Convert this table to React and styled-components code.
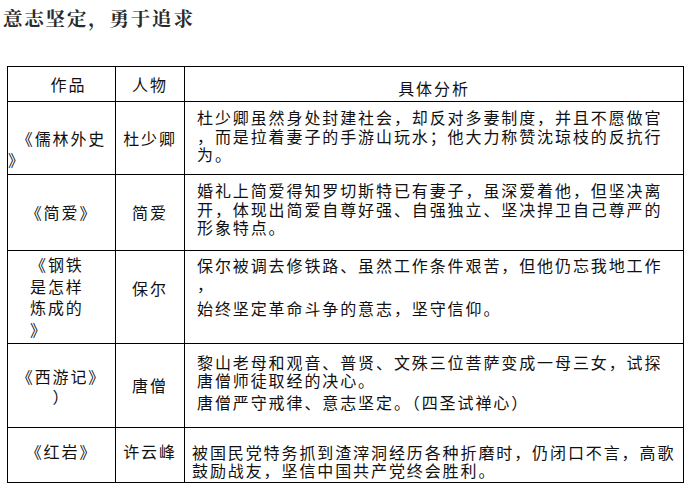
import React from 'react';
import styled, { createGlobalStyle } from 'styled-components';

const GlobalStyle = createGlobalStyle`
    html, body {
        margin: 0;
        padding: 0;
        background: #ffffff;
    }
    body {
        font-family: "Noto Sans CJK SC", "Liberation Sans", sans-serif;
        color: #111111;
    }
`

const rows = [
    {
        height: 73,
        work: { lines: ['《儒林外史', '》'], padTop: 21, lastLeft: true },
        person: { name: '杜少卿' },
        analysis: {
            padTop: 6,
            paras: [['杜少卿虽然身处封建社会，却反对多妻制度，并且不愿做官', '，而是拉着妻子的手游山玩水；他大力称赞沈琼枝的反抗行', '为。']],
        },
    },
    {
        height: 76,
        work: { lines: ['《简爱》'] },
        person: { name: '简爱' },
        analysis: {
            padTop: 6,
            paras: [['婚礼上简爱得知罗切斯特已有妻子，虽深爱着他，但坚决离', '开，体现出简爱自尊好强、自强独立、坚决捍卫自己尊严的', '形象特点。']],
        },
    },
    {
        height: 93,
        work: { lines: ['《钢铁', '是怎样', '炼成的', '》'], left: 22, lineHeight: 21.5 },
        person: { name: '保尔', padBottom: 18 },
        analysis: {
            padTop: 5,
            gap: 6,
            paras: [['保尔被调去修铁路、虽然工作条件艰苦，但他仍忘我地工作', '，'], ['始终坚定革命斗争的意志，坚守信仰。']],
        },
    },
    {
        height: 84,
        work: { lines: ['《西游记》', '）'], lineHeight: 20 },
        person: { name: '唐僧' },
        analysis: {
            padTop: 9,
            lineHeight: 18,
            gap: 4,
            paras: [['黎山老母和观音、普贤、文殊三位菩萨变成一母三女，试探', '唐僧师徒取经的决心。'], ['唐僧严守戒律、意志坚定。（四圣试禅心）']],
        },
    },
    {
        height: 55,
        work: { lines: ['《红岩》'], padBottom: 7 },
        person: { name: '许云峰', padBottom: 7 },
        analysis: {
            padTop: 15,
            padLeft: 0,
            indent: 7,
            lineHeight: 18.3,
            paras: [['被国民党特务抓到渣滓洞经历各种折磨时，仍闭口不言，高歌', '鼓励战友，坚信中国共产党终会胜利。']],
        },
    },
]

export default function App() {
    return (
        <Page>
            <GlobalStyle />
            <Title>意志坚定，勇于追求</Title>
            <Table>
                <colgroup>
                    <col style={{ width: 108 }} />
                    <col style={{ width: 69 }} />
                    <col style={{ width: 499 }} />
                </colgroup>
                <thead>
                    <Row $height={35}>
                        <HeadCell $padLeft={14}>作品</HeadCell>
                        <HeadCell>人物</HeadCell>
                        <HeadCell $padTop={8}>具体分析</HeadCell>
                    </Row>
                </thead>
                <tbody>
                    {rows.map((row, i) => (
                        <Row key={i} $height={row.height}>
                            <WorkCell
                                $left={row.work.left}
                                $padTop={row.work.padTop}
                                $padBottom={row.work.padBottom}
                            >
                                {row.work.lines.map((line, j) => (
                                    <WorkLine
                                        key={j}
                                        $lineHeight={row.work.lineHeight}
                                        $toLeft={row.work.lastLeft && j === row.work.lines.length - 1}
                                    >
                                        {line}
                                    </WorkLine>
                                ))}
                            </WorkCell>
                            <PersonCell $padBottom={row.person.padBottom}>{row.person.name}</PersonCell>
                            <AnalysisCell
                                $padTop={row.analysis.padTop}
                                $padLeft={row.analysis.padLeft}
                                $indent={row.analysis.indent}
                            >
                                {row.analysis.paras.map((para, j) => (
                                    <Para key={j} $gap={j > 0 ? row.analysis.gap : 0}>
                                        {para.map((line, k) => (
                                            <TextLine key={k} $lineHeight={row.analysis.lineHeight}>
                                                {line}
                                            </TextLine>
                                        ))}
                                    </Para>
                                ))}
                            </AnalysisCell>
                        </Row>
                    ))}
                </tbody>
            </Table>
        </Page>
    )
}

const Page = styled.div`
    width: 693px;
    height: 490px;
    overflow: hidden;
    background: #ffffff;
`

const Title = styled.h1`
    margin: 0;
    padding: 6px 0 0 3px;
    height: 24px;
    font-family: "Noto Serif CJK SC", "Noto Sans CJK SC", serif;
    font-size: 19.5px;
    font-weight: 700;
    line-height: 24px;
    letter-spacing: 1.8px;
    color: #2a2a2a;
`

const Table = styled.table`
    margin: 36px 0 0 7px;
    width: 677px;
    border-collapse: collapse;
    table-layout: fixed;
    font-size: 16px;
    letter-spacing: 1.9px;
    color: #111111;
`

const Row = styled.tr`
    height: ${({ $height }) => $height}px;
`

const Cell = styled.td`
    border: 1px solid #000000;
    padding: 0;
    vertical-align: middle;
    text-align: center;
    line-height: 18.5px;
`

const HeadCell = styled(Cell).attrs({ as: 'th' })`
    font-weight: 400;
    padding-left: ${({ $padLeft }) => $padLeft || 0}px;
    padding-top: ${({ $padTop }) => $padTop || 0}px;
`

const WorkCell = styled(Cell)`
    text-align: ${({ $left }) => ($left !== undefined ? 'left' : 'center')};
    padding-left: ${({ $left }) => $left || 0}px;
    padding-top: ${({ $padTop }) => $padTop || 0}px;
    padding-bottom: ${({ $padBottom }) => $padBottom || 0}px;
`

const WorkLine = styled.div`
    line-height: ${({ $lineHeight }) => $lineHeight || 21}px;
    white-space: nowrap;
    text-align: ${({ $toLeft }) => ($toLeft ? 'left' : 'inherit')};
`

const PersonCell = styled(Cell)`
    padding-bottom: ${({ $padBottom }) => $padBottom || 0}px;
`

const AnalysisCell = styled(Cell)`
    vertical-align: top;
    text-align: left;
    padding-top: ${({ $padTop }) => $padTop}px;
    padding-left: ${({ $padLeft }) => ($padLeft !== undefined ? $padLeft : 12)}px;
    text-indent: ${({ $indent }) => $indent || 0}px;
`

const Para = styled.div`
    margin-top: ${({ $gap }) => $gap}px;
`

const TextLine = styled.div`
    line-height: ${({ $lineHeight }) => $lineHeight || 18.5}px;
    white-space: nowrap;
`
